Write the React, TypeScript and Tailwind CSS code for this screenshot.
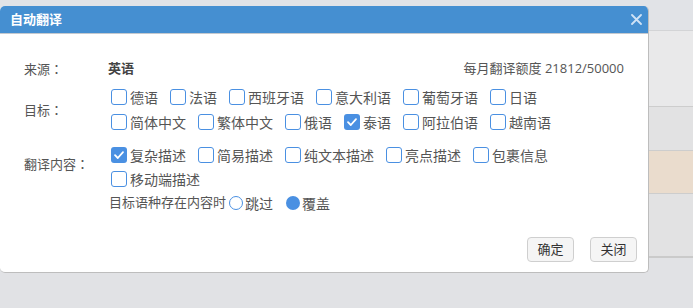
import React from "react";

const FONT = { fontFamily: '"Open Sans", "Noto Sans CJK SC", sans-serif' };
// TC variant centres full-width colons like the original UI font
const LABEL = { fontFamily: '"Noto Sans CJK TC", "Noto Sans CJK SC", sans-serif' };

type Opt = { label: string; checked?: boolean };

const targetRow1: Opt[] = [
  { label: "德语" },
  { label: "法语" },
  { label: "西班牙语" },
  { label: "意大利语" },
  { label: "葡萄牙语" },
  { label: "日语" },
];
const targetRow2: Opt[] = [
  { label: "简体中文" },
  { label: "繁体中文" },
  { label: "俄语" },
  { label: "泰语", checked: true },
  { label: "阿拉伯语" },
  { label: "越南语" },
];
const contentOpts: Opt[] = [
  { label: "复杂描述", checked: true },
  { label: "简易描述" },
  { label: "纯文本描述" },
  { label: "亮点描述" },
  { label: "包裹信息" },
  { label: "移动端描述" },
];

function Check({ label, checked }: Opt) {
  return (
    <label className="flex items-center gap-[3px] mr-[12px] h-[20px] text-[14px] text-[#555]">
      {checked ? (
        <span className="w-[16px] h-[16px] rounded-[3px] bg-[#4a90e2] flex items-center justify-center">
          <svg width="12" height="12" viewBox="0 0 12 12" fill="none">
            <path d="M2 6.2 L4.8 9 L10 3.2" stroke="#fff" strokeWidth="1.8" strokeLinecap="round" strokeLinejoin="round" />
          </svg>
        </span>
      ) : (
        <span className="w-[16px] h-[16px] rounded-[3px] border border-[#4a90e2] bg-white" />
      )}
      <span>{label}</span>
    </label>
  );
}

function Radio({ label, checked }: Opt) {
  return (
    <label className="flex items-center gap-[2px] mr-[13px] h-[20px] text-[14px] text-[#555]">
      {checked ? (
        <span className="w-[14px] h-[14px] rounded-full bg-[#4a90e2]" />
      ) : (
        <span className="w-[14px] h-[14px] rounded-full border border-[#4a90e2] bg-white" />
      )}
      <span>{label}</span>
    </label>
  );
}

export default function App() {
  return (
    <div className="relative w-[693px] h-[308px] overflow-hidden bg-[#e1e2e5]" style={FONT}>
      {/* page behind the modal */}
      <div className="flex flex-col">
        <div className="h-[31px] bg-[#e1e3e7] border-b border-[#d3d4d6]" />
        <div className="h-[76px] bg-[#e9e9ea] border-b border-[#cdcdcd]" />
        <div className="h-[44px] bg-[#e2e2e3] border-b border-[#cdcdcd]" />
        <div className="h-[43px] bg-[#eadccd] border-b border-[#cdcdcd]" />
        <div className="h-[64px] bg-[#e2e2e3] border-b-2 border-[#cacaca]" />
      </div>

      {/* dialog */}
      <div className="absolute left-0 top-[6px] w-[649px] h-[267px] bg-white rounded-[5px] border-r border-b border-[#bdbdbd] overflow-hidden">
        <div className="h-[28px] bg-[#458fd1] border-b border-[#c4c9cf] flex items-center justify-between pl-[10px] pr-[6px]">
          <span className="text-[13px] font-bold text-white">自动翻译</span>
          <svg width="11" height="11" viewBox="0 0 11 11">
            <path d="M1 1 L10 10 M10 1 L1 10" stroke="#cfe2f6" strokeWidth="1.8" strokeLinecap="round" />
          </svg>
        </div>

        <div className="px-[24px] text-[13px] text-[#555]">
          {/* source */}
          <div className="mt-[25px] h-[20px] flex items-center">
            <span className="w-[84px]" style={LABEL}>来源：</span>
            <span className="font-bold text-[#444]">英语</span>
            <span className="ml-auto">每月翻译额度 21812/50000</span>
          </div>

          {/* target */}
          <div className="mt-[8px] flex items-center">
            <span className="w-[84px]" style={LABEL}>目标：</span>
            <div className="pl-[3px] flex flex-col gap-[5px]">
              <div className="flex">
                {targetRow1.map((o) => (
                  <Check key={o.label} {...o} />
                ))}
              </div>
              <div className="flex">
                {targetRow2.map((o) => (
                  <Check key={o.label} {...o} />
                ))}
              </div>
            </div>
          </div>

          {/* content */}
          <div className="mt-[13px] flex items-start">
            <span className="w-[84px] mt-[9px] leading-[20px]" style={LABEL}>翻译内容：</span>
            <div className="pl-[3px] flex-1 flex flex-wrap gap-y-[4px]">
              {contentOpts.map((o) => (
                <Check key={o.label} {...o} />
              ))}
            </div>
          </div>

          {/* existing content */}
          <div className="mt-[4px] pl-[85px] h-[20px] flex items-center">
            <span className="mr-[3px]">目标语种存在内容时</span>
            <Radio label="跳过" />
            <Radio label="覆盖" checked />
          </div>
        </div>

        <div className="mt-[24px] pr-[11px] flex justify-end gap-[16px]">
          <button className="w-[47px] h-[25px] rounded-[4px] border border-[#cfcfcf] bg-[#f5f5f5] text-[13px] text-[#333]">
            确定
          </button>
          <button className="w-[47px] h-[25px] rounded-[4px] border border-[#cfcfcf] bg-[#f5f5f5] text-[13px] text-[#333]">
            关闭
          </button>
        </div>
      </div>
    </div>
  );
}
